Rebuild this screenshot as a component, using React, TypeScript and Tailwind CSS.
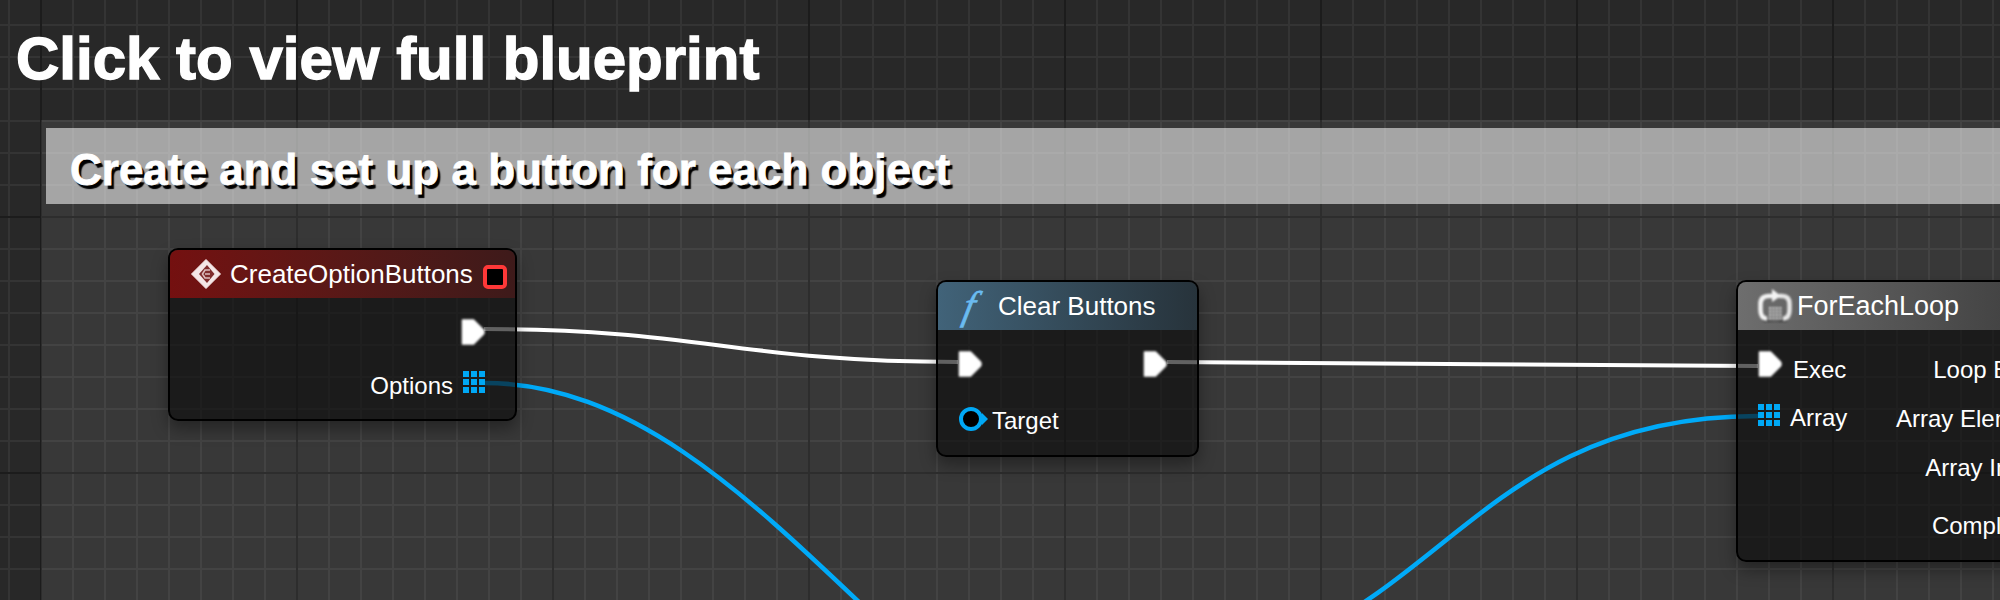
const GRID =
  "bg-[#282828] bg-[linear-gradient(to_right,#1c1c1c_0,#1c1c1c_2px,transparent_2px),linear-gradient(to_bottom,#1c1c1c_0,#1c1c1c_2px,transparent_2px),linear-gradient(to_right,#343434_0,#343434_2px,transparent_2px),linear-gradient(to_bottom,#343434_0,#343434_2px,transparent_2px)] bg-[size:256px_256px,256px_256px,32px_32px,32px_32px] bg-[position:40px_0,0_216px,8px_0,0_24px]";

function ExecPin() {
  return (
    <svg width="24" height="28" viewBox="0 0 24 28" className="blur-[0.8px]">
      <path d="M1.5 2 H12.5 L22.5 12 Q23.5 14 22.5 16 L12.5 26 H1.5 Z" fill="#fff" stroke="#fff" strokeWidth="1.5" strokeLinejoin="round" />
    </svg>
  );
}

function ArrayPin() {
  const cells = [0, 8, 16];
  return (
    <svg width="22" height="22" viewBox="0 0 22 22">
      {cells.map((y) => cells.map((x) => <rect key={`${x}-${y}`} x={x} y={y} width="6" height="6" fill="#00a8f5" />))}
    </svg>
  );
}

function TargetPin() {
  return (
    <svg width="30" height="26" viewBox="0 0 30 26">
      <circle cx="13" cy="13" r="10" fill="#000" stroke="#00a8f5" strokeWidth="4" />
      <path d="M24 7 L30 13 L24 19 Z" fill="#00a8f5" />
    </svg>
  );
}

function EventIcon() {
  return (
    <svg width="32" height="32" viewBox="0 0 32 32" className="blur-[0.7px]">
      <path d="M16 1.5 L30.5 16 L16 30.5 L1.5 16 Z" fill="#f4e6e6" strokeLinejoin="round" stroke="#f4e6e6" strokeWidth="1" />
      <path d="M17 7 L24.5 16 L17 25 L9 16 Z" fill="#7f2c2c" />
      <path d="M20 12 H15 L12.5 16 L15 20 H20 M15 16 H20" fill="none" stroke="#dcbcbc" strokeWidth="1.6" />
    </svg>
  );
}

function LoopIcon() {
  return (
    <svg width="34" height="34" viewBox="0 0 34 34" className="blur-[0.8px]">
      <path d="M4 30 Q16 35 30 30 L28 33 H6 Z" fill="#333" />
      <path d="M9 30 Q2.5 29 2.5 21 V15 Q2.5 7 11 7 H15" fill="none" stroke="#f4f4f4" strokeWidth="4.5" />
      <path d="M25 30 Q31.5 29 31.5 21 V15 Q31.5 7 24 7 H21" fill="none" stroke="#e8e8e8" strokeWidth="4.5" />
      <path d="M14 0 L23 7 L14 13 Z" fill="#f4f4f4" />
      {[0, 1, 2, 3].map((r) =>
        [0, 1, 2, 3].map((c) => (
          <rect key={`${r}-${c}`} x={11 + c * 3.4} y={18 + r * 3.4} width="2.2" height="2.2" fill="#d8d8d8" />
        ))
      )}
    </svg>
  );
}

export default function App() {
  return (
    <div className={`relative h-[600px] w-[2000px] overflow-hidden font-['Liberation_Sans',Arial,sans-serif] text-white ${GRID}`}>
      <h1 className="px-4 pt-6 text-[60px] leading-[70px] font-bold [-webkit-text-stroke:1.4px_white]">Click to view full blueprint</h1>

      {/* comment box */}
      <div className="absolute top-[120px] right-0 bottom-0 left-[41px] bg-white/[0.08] pt-2 pl-[5px]">
        <div className="flex h-[76px] items-center bg-white/55 pt-2 pl-6 text-[44px] font-bold [-webkit-text-stroke:0.8px_white] [text-shadow:3px_4px_1px_#000]">
          Create and set up a button for each object
        </div>
      </div>

      {/* wires */}
      <svg className="absolute inset-0" width="2000" height="600" fill="none">
        <path d="M484 329 C 700 329 740 362 958 362" stroke="#fff" strokeWidth="4" />
        <path d="M1167 362 C 1350 362 1570 366 1758 366" stroke="#fff" strokeWidth="4" />
        <path d="M485 383 C 772 383 948 823 1235 823" stroke="#00aaf8" strokeWidth="4.5" />
        <path d="M1122 674 C 1436 674 1444 416 1758 416" stroke="#00aaf8" strokeWidth="4.5" />
      </svg>

      {/* CreateOptionButtons */}
      <div className="absolute top-[248px] left-[168px] flex h-[173px] w-[349px] flex-col rounded-[10px] border-2 border-black bg-[#0d0d0d]/65 shadow-[0_8px_16px_rgba(0,0,0,0.35)]">
        <div className="flex h-[48px] items-center rounded-t-[8px] bg-gradient-to-r from-[#741010] to-[#3e1a1a] pr-2 pl-[20px]">
          <EventIcon />
          <span className="ml-[8px] text-[26px] leading-none">CreateOptionButtons</span>
          <span className="mt-[5px] ml-auto box-border h-6 w-6 rounded-[5px] border-[4px] border-[#ff3838] bg-black" />
        </div>
        <div className="flex flex-col items-end pr-[30px]">
          <div className="mt-[20px] flex h-7 items-center"><ExecPin /></div>
          <div className="mt-[25px] flex h-[22px] items-center gap-[10px] text-[24px]">
            <span className="mt-[8px]">Options</span>
            <ArrayPin />
          </div>
        </div>
      </div>

      {/* Clear Buttons */}
      <div className="absolute top-[280px] left-[936px] flex h-[177px] w-[263px] flex-col rounded-[10px] border-2 border-black bg-[#0d0d0d]/65 shadow-[0_8px_16px_rgba(0,0,0,0.35)]">
        <div className="flex h-[48px] items-center rounded-t-[8px] bg-gradient-to-r from-[#416379] to-[#27333b] pl-[26px]">
          <span className="w-[34px] -skew-x-12 font-['Liberation_Serif',serif] text-[40px] leading-none text-[#6abbf0] italic [-webkit-text-stroke:0.6px_#6abbf0]">f</span>
          <span className="text-[26px] leading-none">Clear Buttons</span>
        </div>
        <div className="flex justify-between pt-[20px] pr-[30px] pl-[20px]">
          <ExecPin />
          <ExecPin />
        </div>
        <div className="mt-[21px] flex items-center pl-[20px] text-[24px]">
          <TargetPin />
          <span className="mt-[4px] ml-[4px]">Target</span>
        </div>
      </div>

      {/* ForEachLoop */}
      <div className="absolute top-[280px] left-[1736px] flex h-[282px] w-[334px] flex-col rounded-[10px] border-2 border-black bg-[#0d0d0d]/65 shadow-[0_8px_16px_rgba(0,0,0,0.35)]">
        <div className="flex h-[48px] items-center rounded-t-[8px] bg-gradient-to-r from-[#6e6e6e] to-[#3a3a3a] pl-[20px]">
          <LoopIcon />
          <span className="ml-[5px] text-[27px] leading-none">ForEachLoop</span>
        </div>
        <div className="flex justify-between pr-5 text-[24px]">
          <div className="flex flex-col pt-[20px] pl-[20px]">
            <div className="flex h-7 items-center gap-[11px]"><ExecPin /><span className="mt-[11px]">Exec</span></div>
            <div className="mt-[23px] flex h-7 items-center gap-[10px]"><ArrayPin /><span className="mt-[6px]">Array</span></div>
          </div>
          <div className="flex flex-col items-end pt-[26px]">
            <div className="flex h-7 items-center">Loop Body</div>
            <div className="mt-[21px] flex h-7 items-center">Array Element</div>
            <div className="mt-[21px] flex h-7 items-center">Array Index</div>
            <div className="mt-[30px] flex h-7 items-center">Completed</div>
          </div>
        </div>
      </div>
    </div>
  );
}
